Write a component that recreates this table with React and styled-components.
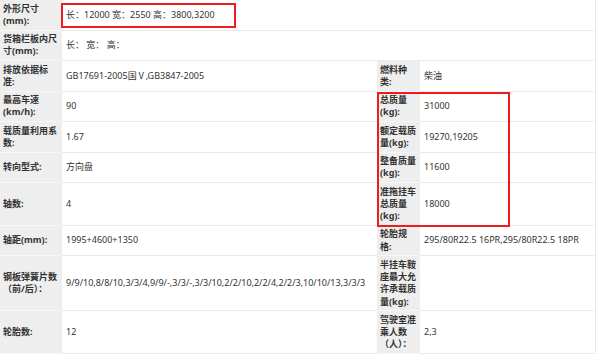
import React from 'react';
import styled, { createGlobalStyle } from 'styled-components';

const GlobalStyle = createGlobalStyle`
    body {
        margin: 0;
        background: #fff;
        font-family: "Noto Sans", "Noto Sans CJK SC", sans-serif;
    }
`

const Sheet = styled.div`
    position: relative;
    width: 596px;
`

const Table = styled.table`
    width: 596px;
    table-layout: fixed;
    border-collapse: separate;
    border-spacing: 0;
    border-right: 1px solid #e9e9e9;
    font-size: 9px;
    line-height: 12.25px;
    color: #333;
`

const Col = styled.col`
    width: ${p => (p.$w ? `${p.$w}px` : 'auto')};
`

const Label = styled.th`
    background: #eeeeee;
    font-weight: bold;
    text-align: left;
    vertical-align: middle;
    padding: 2.5px 3px;
    border-bottom: 1px solid #f6f6f6;
`

const Value = styled.td`
    background: #fff;
    vertical-align: middle;
    padding: 2.5px 4px;
    border-bottom: 1px solid #ebebeb;
    white-space: ${p => (p.$nowrap ? 'nowrap' : 'normal')};
`

// red annotation boxes drawn over the original screenshot
const Mark = styled.div`
    position: absolute;
    border: 2px solid #ee1c1c;
    box-sizing: border-box;
    pointer-events: none;
`

const SizeMark = styled(Mark)`
    left: 61px;
    top: 3px;
    width: 175px;
    height: 25px;
`

const MassMark = styled(Mark)`
    left: 377px;
    top: 92px;
    width: 133px;
    height: 135px;
`

const ROWS = [
    { label: '外形尺寸(mm):', value: '长：12000 宽：2550 高：3800,3200', span: true },
    { label: '货箱栏板内尺寸(mm):', value: '长：  宽：  高：', span: true },
    { label: '排放依据标准:', value: 'GB17691-2005国Ⅴ,GB3847-2005', label2: '燃料种类:', value2: '柴油' },
    { label: '最高车速(km/h):', value: '90', label2: '总质量(kg):', value2: '31000' },
    { label: '载质量利用系数:', value: '1.67', label2: '额定载质量(kg):', value2: '19270,19205' },
    { label: '转向型式:', value: '方向盘', label2: '整备质量(kg):', value2: '11600' },
    { label: '轴数:', value: '4', label2: '准拖挂车总质量(kg):', value2: '18000' },
    { label: '轴距(mm):', value: '1995+4600+1350', label2: '轮胎规格:', value2: '295/80R22.5 16PR,295/80R22.5 18PR' },
    { label: '钢板弹簧片数（前/后）：', value: '9/9/10,8/8/10,3/3/4,9/9/-,3/3/-,3/3/10,2/2/10,2/2/4,2/2/3,10/10/13,3/3/3', label2: '半挂车鞍座最大允许承载质量(kg):', value2: '' },
    { label: '轮胎数:', value: '12', label2: '驾驶室准乘人数（人）：', value2: '2,3' },
]

export default function App() {
    return (
        <Sheet>
            <GlobalStyle />
            <Table>
                <colgroup>
                    <Col $w={62} />
                    <Col $w={315} />
                    <Col $w={43} />
                    <Col />
                </colgroup>
                <tbody>
                    {ROWS.map((r, i) => (
                        <tr key={i}>
                            <Label>{r.label}</Label>
                            {r.span ? (
                                <Value colSpan={3}>{r.value}</Value>
                            ) : (
                                <>
                                    <Value $nowrap>{r.value}</Value>
                                    <Label>{r.label2}</Label>
                                    <Value>{r.value2}</Value>
                                </>
                            )}
                        </tr>
                    ))}
                </tbody>
            </Table>
            <SizeMark />
            <MassMark />
        </Sheet>
    )
}
